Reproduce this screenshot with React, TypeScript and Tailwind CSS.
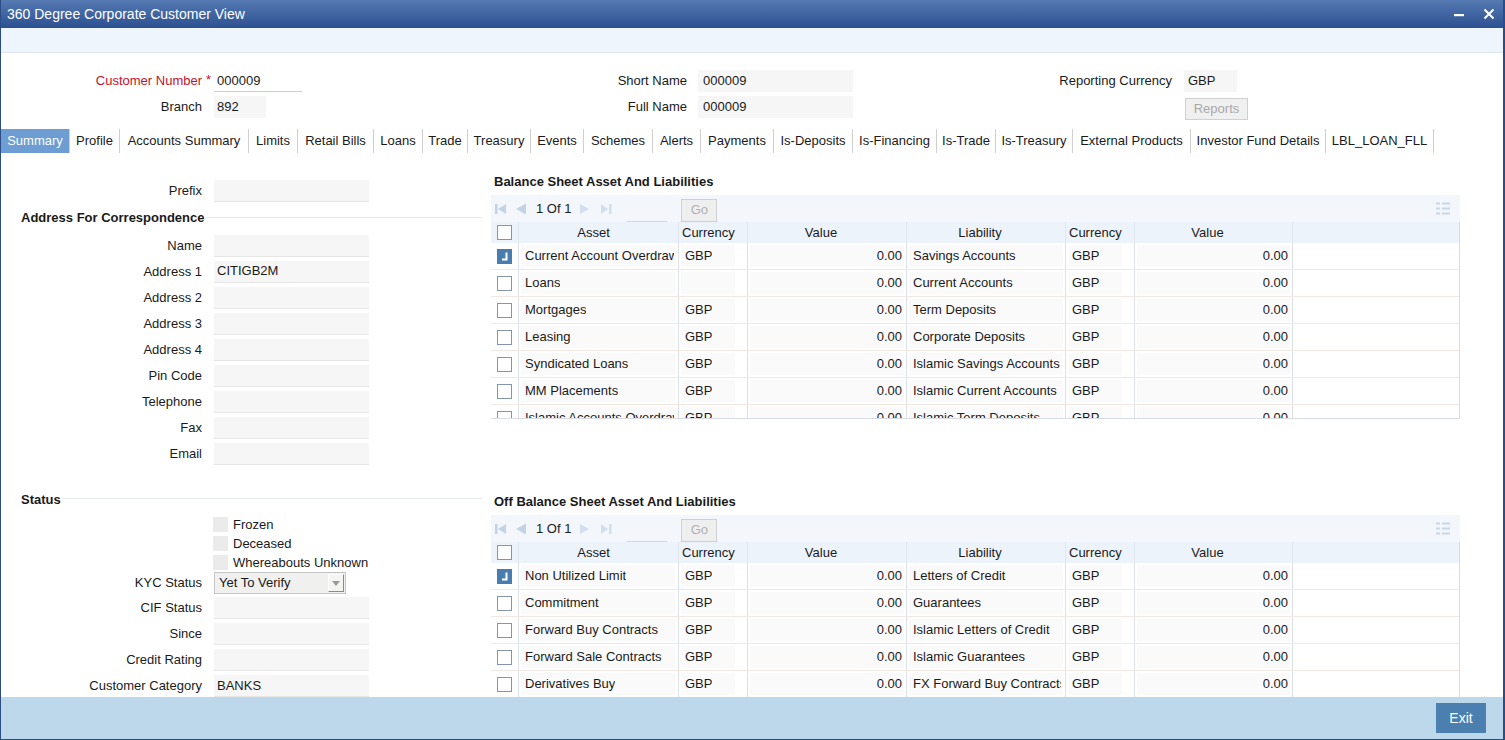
import React from "react";

const tabs: [string, string][] = [
  ["Summary", "w-[69px]"],
  ["Profile", "w-[50px]"],
  ["Accounts Summary", "w-[129px]"],
  ["Limits", "w-[49px]"],
  ["Retail Bills", "w-[76px]"],
  ["Loans", "w-[49px]"],
  ["Trade", "w-[45px]"],
  ["Treasury", "w-[63px]"],
  ["Events", "w-[53px]"],
  ["Schemes", "w-[69px]"],
  ["Alerts", "w-[48px]"],
  ["Payments", "w-[73px]"],
  ["Is-Deposits", "w-[79px]"],
  ["Is-Financing", "w-[84px]"],
  ["Is-Trade", "w-[59px]"],
  ["Is-Treasury", "w-[77px]"],
  ["External Products", "w-[118px]"],
  ["Investor Fund Details", "w-[135px]"],
  ["LBL_LOAN_FLL", "w-[108px]"],
];

type Row = { checked?: boolean; asset: string; acy: string; liability: string; lcy: string };

const balanceRows: Row[] = [
  { checked: true, asset: "Current Account Overdrawn", acy: "GBP", liability: "Savings Accounts", lcy: "GBP" },
  { asset: "Loans", acy: "", liability: "Current Accounts", lcy: "GBP" },
  { asset: "Mortgages", acy: "GBP", liability: "Term Deposits", lcy: "GBP" },
  { asset: "Leasing", acy: "GBP", liability: "Corporate Deposits", lcy: "GBP" },
  { asset: "Syndicated Loans", acy: "GBP", liability: "Islamic Savings Accounts", lcy: "GBP" },
  { asset: "MM Placements", acy: "GBP", liability: "Islamic Current Accounts", lcy: "GBP" },
  { asset: "Islamic Accounts Overdrawn", acy: "GBP", liability: "Islamic Term Deposits", lcy: "GBP" },
];

const offBalanceRows: Row[] = [
  { checked: true, asset: "Non Utilized Limit", acy: "GBP", liability: "Letters of Credit", lcy: "GBP" },
  { asset: "Commitment", acy: "GBP", liability: "Guarantees", lcy: "GBP" },
  { asset: "Forward Buy Contracts", acy: "GBP", liability: "Islamic Letters of Credit", lcy: "GBP" },
  { asset: "Forward Sale Contracts", acy: "GBP", liability: "Islamic Guarantees", lcy: "GBP" },
  { asset: "Derivatives Buy", acy: "GBP", liability: "FX Forward Buy Contracts", lcy: "GBP" },
  { asset: "Derivatives Sale", acy: "GBP", liability: "FX Forward Sale Contracts", lcy: "GBP" },
];

const cols = "grid grid-cols-[28px_160px_69px_159px_159px_69px_158px_1fr]";

const Field = ({ label, value = "" }: { label: string; value?: string }) => (
  <div className="flex h-[22px] items-center">
    <div className="w-[201px] text-right">{label}</div>
    <div className="ml-[12px] w-[155px] h-full bg-[#f6f6f6] border-b border-[#e6e6e6] pl-[3px] flex items-center">
      {value}
    </div>
  </div>
);

// bold caption with a thin rule running to the panel edge
const SectionHeader = ({ title, className = "" }: { title: string; className?: string }) => (
  <div className={`flex items-center pl-[20px] ${className}`}>
    <span className="font-bold">{title}</span>
    <div className="flex-1 h-px bg-[#e3e8ee] ml-[2px] -mt-[1px]" />
  </div>
);

const Check = ({ checked }: { checked?: boolean }) =>
  checked ? (
    <div className="w-[15px] h-[15px] bg-[#4a7cb0]">
      <svg width="15" height="15" viewBox="0 0 15 15">
        <path d="M9.5 3.5 V10.5 H5" stroke="white" strokeWidth="2" fill="none" />
      </svg>
    </div>
  ) : (
    <div className="w-[15px] h-[15px] bg-white border border-[#8696aa]" />
  );

const Pager = () => (
  <div className="h-[27px] shrink-0 bg-[#f3f7fc] flex items-center pl-[4px] pr-[10px]">
    <svg width="12" height="12" viewBox="0 0 12 12" className="fill-[#c3d3e6]">
      <rect x="0" y="1" width="2.5" height="10" />
      <path d="M11 1 V11 L3 6 Z" />
    </svg>
    <svg width="12" height="12" viewBox="0 0 12 12" className="ml-[8px] fill-[#c3d3e6]">
      <path d="M11 0.5 V11.5 L1 6 Z" />
    </svg>
    <span className="ml-[9px] text-[#1a1a1a]">1 Of 1</span>
    <svg width="12" height="12" viewBox="0 0 12 12" className="ml-[8px] fill-[#d3dfee]">
      <path d="M1 1 V11 L10 6 Z" />
    </svg>
    <svg width="11" height="12" viewBox="0 0 11 12" className="ml-[10px] fill-[#d3dfee]">
      <path d="M0 1 V11 L7 6 Z" />
      <rect x="8" y="1" width="2.5" height="10" />
    </svg>
    <div className="ml-[15px] w-[40px] h-[20px] border-b border-[#d6d6d6] mt-[6px]" />
    <div className="ml-[14px] mt-[3px] w-[36px] h-[23px] bg-[#efefef] border border-[#d0d0d0] text-[#b0b0b0] flex items-center justify-center">
      Go
    </div>
    <div className="flex-1" />
    <svg width="14" height="13" viewBox="0 0 14 13" className="fill-[#c8d5e7]">
      <rect x="0" y="0.5" width="4" height="2" />
      <rect x="6" y="0.5" width="8" height="2" />
      <rect x="0" y="5.5" width="4" height="2" />
      <rect x="6" y="5.5" width="8" height="2" />
      <rect x="0" y="10.5" width="4" height="2" />
      <rect x="6" y="10.5" width="8" height="2" />
    </svg>
  </div>
);

const HeaderRow = () => (
  <div className={`${cols} h-[21px] shrink-0 bg-[#edf3fb] border-r border-[#d3dbe5]`}>
    <div className="flex items-center justify-center border-r border-[#dfe6ee]">
      <Check />
    </div>
    <div className="flex items-center justify-center pr-[10px] border-r border-[#dfe6ee]">Asset</div>
    <div className="flex items-center pl-[3px] border-r border-[#dfe6ee]">Currency</div>
    <div className="flex items-center justify-center pr-[12px] border-r border-[#dfe6ee]">Value</div>
    <div className="flex items-center justify-center pr-[12px] border-r border-[#dfe6ee]">Liability</div>
    <div className="flex items-center pl-[3px] border-r border-[#dfe6ee]">Currency</div>
    <div className="flex items-center justify-center pr-[12px] border-r border-[#dfe6ee]">Value</div>
    <div />
  </div>
);

const Cell = ({ text, right, narrow }: { text: string; right?: boolean; narrow?: boolean }) => (
  <div className={`border-r border-[#dbe1e8] ${narrow ? "py-[2px] pl-[2px]" : "p-[2px]"}`}>
    <div
      className={`h-full bg-[#fafafa] flex items-center ${narrow ? "w-[54px]" : ""} ${
        right ? "justify-end pr-[2px]" : "pl-[4px] pr-[2px]"
      }`}
    >
      <span className="block overflow-hidden whitespace-nowrap">{text}</span>
    </div>
  </div>
);

const DataRow = ({ row }: { row: Row }) => (
  <div className={`${cols} h-[27px] shrink-0 border-b border-[#f0e8e1]`}>
    <div className="flex items-center justify-center border-r border-[#dbe1e8]">
      <Check checked={row.checked} />
    </div>
    <Cell text={row.asset} />
    <Cell text={row.acy} narrow />
    <Cell text="0.00" right />
    <Cell text={row.liability} />
    <Cell text={row.lcy} narrow />
    <Cell text="0.00" right />
    <div />
  </div>
);

const Grid = ({ rows, body, className = "" }: { rows: Row[]; body: string; className?: string }) => (
  <div className={`w-[969px] flex flex-col min-h-0 ${className}`}>
    <Pager />
    <HeaderRow />
    <div className={body}>
      {rows.map((r) => (
        <DataRow key={r.asset} row={r} />
      ))}
    </div>
  </div>
);

export default function App() {
  return (
    <div className="w-screen h-screen flex flex-col bg-white border-l border-r-2 border-b border-[#2b4c85] overflow-hidden font-['Liberation_Sans',Arial,sans-serif] text-[13px] text-[#1a1a1a]">
      {/* title bar */}
      <div className="h-[28px] shrink-0 bg-linear-to-b from-[#5579b2] to-[#2c5191] flex items-center text-white">
        <span className="ml-[6px] text-[14px]">360 Degree Corporate Customer View</span>
        <div className="flex-1" />
        <svg width="12" height="12" viewBox="0 0 12 12" className="mr-[18px]">
          <rect x="1" y="6" width="10" height="2.2" fill="white" />
        </svg>
        <svg width="12" height="12" viewBox="0 0 12 12" className="mr-[8px]">
          <path d="M1.5 1.5 L10.5 10.5 M10.5 1.5 L1.5 10.5" stroke="white" strokeWidth="2" />
        </svg>
      </div>
      <div className="h-[25px] shrink-0 bg-[#eef5fd] border-b border-[#dde5ee]" />

      {/* header fields */}
      <div className="shrink-0 flex pt-[17px] pb-[11px]">
        <div className="w-[530px] flex flex-col gap-1">
          <div className="flex h-[22px] items-center">
            <div className="w-[201px] text-right text-[#c8102e]">Customer Number</div>
            <div className="w-[12px] text-[#c8102e] pl-[4px] -mt-[3px]">*</div>
            <div className="w-[88px] h-full border-b border-[#cfcfcf] pl-[3px] flex items-center">000009</div>
          </div>
          <div className="flex h-[22px] items-center">
            <div className="w-[201px] text-right">Branch</div>
            <div className="ml-[12px] w-[52px] h-full bg-[#f6f6f6] pl-[3px] flex items-center">892</div>
          </div>
        </div>
        <div className="w-[470px] flex flex-col gap-1">
          <div className="flex h-[22px] items-center">
            <div className="w-[156px] text-right">Short Name</div>
            <div className="ml-[11px] w-[155px] h-full bg-[#f6f6f6] pl-[5px] flex items-center">000009</div>
          </div>
          <div className="flex h-[22px] items-center">
            <div className="w-[156px] text-right">Full Name</div>
            <div className="ml-[11px] w-[155px] h-full bg-[#f6f6f6] pl-[5px] flex items-center">000009</div>
          </div>
        </div>
        <div className="flex flex-col gap-1">
          <div className="flex h-[22px] items-center">
            <div className="w-[171px] text-right">Reporting Currency</div>
            <div className="ml-[12px] w-[53px] h-full bg-[#f6f6f6] pl-[4px] flex items-center">GBP</div>
          </div>
          <div className="h-[22px] flex items-start">
            <div className="ml-[184px] mt-[2px] w-[63px] h-[22px] bg-[#f0f0f0] border border-[#d0d0d0] text-[#a8a8a8] flex items-center justify-center">
              Reports
            </div>
          </div>
        </div>
      </div>

      {/* tabs */}
      <div className="h-[24px] shrink-0 flex">
        {tabs.map(([t, w], i) => (
          <div
            key={t}
            className={`${w} flex items-center justify-center whitespace-nowrap border-r border-[#cfcfcf] ${
              i === 0 ? "bg-[#6d9dd3] text-white" : ""
            }`}
          >
            {t}
          </div>
        ))}
      </div>

      {/* main */}
      <div className="flex-1 flex overflow-hidden min-h-0">
        <div className="w-[481px] shrink-0 pt-[27px] flex flex-col">
          <Field label="Prefix" />
          <SectionHeader title="Address For Correspondence" className="mt-1 h-[25px]" />
          <div className="mt-1 flex flex-col gap-1">
            <Field label="Name" />
            <Field label="Address 1" value="CITIGB2M" />
            <Field label="Address 2" />
            <Field label="Address 3" />
            <Field label="Address 4" />
            <Field label="Pin Code" />
            <Field label="Telephone" />
            <Field label="Fax" />
            <Field label="Email" />
          </div>
          <SectionHeader title="Status" className="mt-[22px] h-[26px]" />
          <div className="mt-[3px] flex flex-col">
            {["Frozen", "Deceased", "Whereabouts Unknown"].map((s) => (
              <div key={s} className="h-[19px] flex items-center">
                <div className="ml-[212px] w-[15px] h-[15px] bg-[#ebebeb]" />
                <span className="ml-[5px]">{s}</span>
              </div>
            ))}
          </div>
          <div className="flex h-[22px] items-center">
            <div className="w-[201px] text-right">KYC Status</div>
            <div className="ml-[12px] w-[132px] h-full bg-[#f0f0ee] border border-[#c6c6c6] flex items-center pl-[4px] pr-px">
              <span className="flex-1">Yet To Verify</span>
              <div className="w-[16px] h-[18px] border-l border-t border-white border-r border-b border-r-[#8a8a8a] border-b-[#8a8a8a] bg-[#f4f4f2] flex items-center justify-center">
                <svg width="8" height="5" viewBox="0 0 8 5">
                  <path d="M0 0 H8 L4 5 Z" fill="#9a9a9a" />
                </svg>
              </div>
            </div>
          </div>
          <div className="mt-[3px] flex flex-col gap-1">
            <Field label="CIF Status" />
            <Field label="Since" />
            <Field label="Credit Rating" />
            <Field label="Customer Category" value="BANKS" />
          </div>
        </div>

        <div className="ml-[9px] w-[969px] shrink-0 flex flex-col pt-[16px] overflow-hidden">
          <div className="h-[26px] shrink-0 flex items-center pl-[3px] font-bold">Balance Sheet Asset And Liabilities</div>
          <Grid
            rows={balanceRows}
            className="shrink-0"
            body="h-[176px] shrink-0 overflow-hidden border-b border-r border-[#d8dde3] flex flex-col"
          />
          <div className="mt-[70px] h-[26px] shrink-0 flex items-center pl-[3px] font-bold">
            Off Balance Sheet Asset And Liabilities
          </div>
          <Grid rows={offBalanceRows} body="flex-1 overflow-hidden border-r border-[#d8dde3] flex flex-col" />
        </div>
      </div>

      {/* footer */}
      <div className="h-[42px] shrink-0 bg-[#bdd7eb] flex justify-end items-start">
        <div className="mt-[6px] mr-[17px] w-[50px] h-[30px] bg-[#4a7fb0] text-white text-[14px] flex items-center justify-center">
          Exit
        </div>
      </div>
    </div>
  );
}
